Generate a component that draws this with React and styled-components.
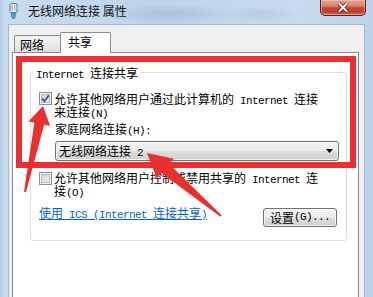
import React from "react";
import styled, { createGlobalStyle } from "styled-components";

const GlobalStyle = createGlobalStyle`
  html, body { margin: 0; padding: 0; width: 373px; height: 297px; overflow: hidden; background: #c2d6ee; }
  body { font-family: "Noto Sans CJK SC", "Noto Sans", sans-serif; font-size: 12px; color: #000; }
  #root { width: 373px; height: 297px; }
`;

const Window = styled.div`
  position: relative;
  width: 373px;
  height: 297px;
  display: flex;
  flex-direction: column;
  overflow: hidden;
  background:
    radial-gradient(ellipse 70px 10px at 170px 14px, rgba(120, 140, 170, 0.28), transparent),
    radial-gradient(ellipse 40px 8px at 260px 14px, rgba(130, 150, 180, 0.22), transparent),
    linear-gradient(90deg, #b7cde8 0px, #c9dbf0 6px, #bfd4ec 40%, #c7daef 80%, #bcd2eb 100%);
`;

const TitleBar = styled.div`
  flex: none;
  height: 24px;
  display: flex;
  align-items: flex-start;
  padding-left: 9px;
`;

const TitleIcon = styled.svg`
  flex: none;
  margin-top: 3px;
`;

const TitleText = styled.div`
  margin-left: 10px;
  padding-top: 4px;
  line-height: 14px;
  font-size: 12px;
  color: #111;
`;

const CloseButton = styled.div`
  margin-left: auto;
  margin-right: 7px;
  width: 46px;
  height: 16px;
  box-sizing: border-box;
  border: 1px solid #5b2218;
  border-top: none;
  border-radius: 0 0 5px 5px;
  background: linear-gradient(180deg, #e6a494 0%, #d98371 40%, #c44a35 52%, #bd3d2a 80%, #d9735a 100%);
  box-shadow: inset 0 0 0 1px rgba(255, 210, 200, 0.45);
  display: flex;
  align-items: center;
  justify-content: center;
`;

const Body = styled.div`
  flex: 1;
  display: flex;
  padding: 0 8px;
  min-height: 0;
`;

const Client = styled.div`
  flex: 1;
  display: flex;
  flex-direction: column;
  background: #f0f0f0;
  border: 1px solid #a7b8cc;
  border-bottom: none;
  padding: 7px 5px 0 3px;
  min-width: 0;
`;

const TabRow = styled.div`
  flex: none;
  height: 20px;
  display: flex;
  align-items: flex-end;
  padding-left: 2px;
`;

const Tab = styled.div`
  position: relative;
  z-index: ${(p) => (p.$active ? 1 : 0)};
  box-sizing: border-box;
  width: ${(p) => p.$width}px;
  height: ${(p) => (p.$active ? 21 : 17)}px;
  margin-left: ${(p) => (p.$active ? -1 : 0)}px;
  margin-bottom: ${(p) => (p.$active ? -1 : 0)}px;
  padding: 2px 0 0 ${(p) => (p.$active ? 7 : 5)}px;
  border: 1px solid #898c95;
  border-bottom: none;
  border-radius: 2px 2px 0 0;
  line-height: 13px;
  background: ${(p) => (p.$active ? "#ffffff" : "linear-gradient(180deg, #f4f4f4 0%, #ebebeb 50%, #dddddd 100%)")};
`;

const Panel = styled.div`
  flex: 1;
  background: #fff;
  border: 1px solid #898c95;
  border-bottom: none;
  padding: 13px 11px 0 17px;
`;

const Group = styled.fieldset`
  margin: 0;
  min-width: 0;
  border: 1px solid #d5dfe5;
  border-radius: 3px;
  padding: 13px 7px 13px 8px;
  display: flex;
  flex-direction: column;
`;

const Legend = styled.legend`
  padding: 0 3px;
  margin-left: -6px;
  line-height: 13px;
`;

const Mono = styled.span`
  font-family: "Liberation Mono", "DejaVu Sans Mono", monospace;
  font-size: 11px;
  line-height: 1px;
  letter-spacing: -0.6px;
`;

const CheckRow = styled.div`
  display: flex;
  align-items: flex-start;
  margin-top: ${(p) => p.$top || 0}px;
`;

const Box = styled.span`
  flex: none;
  box-sizing: border-box;
  width: 13px;
  height: 13px;
  margin-right: 2px;
  margin-top: ${(p) => p.$offset || 0}px;
  border: 1px solid #8e8f8f;
  background: linear-gradient(135deg, #c4c8cf 0%, #e6e8eb 60%, #f7f7f7 100%);
  box-shadow: inset 0 0 0 1px #f5f5f5, inset 0 0 0 2px #b6bac0;
  display: flex;
  align-items: center;
  justify-content: center;
`;

const CheckText = styled.div`
  line-height: 13px;
  white-space: nowrap;
`;

const FieldLabel = styled.div`
  margin: 4px 0 0 16px;
  line-height: 13px;
`;

const Combo = styled.div`
  margin: 6px 0 0 16px;
  height: 20px;
  box-sizing: border-box;
  border: 1px solid #707070;
  border-radius: 3px;
  background: linear-gradient(180deg, #f2f2f2 0%, #ebebeb 48%, #dddddd 52%, #cfcfcf 100%);
  box-shadow: inset 0 0 0 1px rgba(255, 255, 255, 0.7);
  display: flex;
  align-items: center;
  padding: 0 5px 0 3px;
  line-height: 18px;
`;

const ComboValue = styled.span`
  flex: 1;
`;

const LinkRow = styled.div`
  margin-top: 9px;
  display: flex;
  align-items: flex-start;
  justify-content: space-between;
`;

const Link = styled.a`
  color: #0b63b8;
  text-decoration: underline;
  line-height: 13px;
  cursor: pointer;
`;

const Button = styled.div`
  margin: 2px 2px 0 0;
  width: 74px;
  height: 19px;
  box-sizing: border-box;
  border: 1px solid #707070;
  border-radius: 3px;
  background: linear-gradient(180deg, #f2f2f2 0%, #ebebeb 48%, #dddddd 52%, #cfcfcf 100%);
  box-shadow: inset 0 0 0 1px rgba(255, 255, 255, 0.7);
  display: flex;
  align-items: center;
  justify-content: center;
  line-height: 17px;
`;

const Annotations = styled.svg`
  position: absolute;
  left: 0;
  top: 0;
  pointer-events: none;
`;

function arrowPoints(tail, tip, headLen, headHalf, baseHalf, tailHalf) {
  const [tx, ty] = tail;
  const [hx, hy] = tip;
  const dx = hx - tx;
  const dy = hy - ty;
  const L = Math.hypot(dx, dy);
  const ux = dx / L;
  const uy = dy / L;
  const nx = -uy;
  const ny = ux;
  const bx = hx - ux * headLen;
  const by = hy - uy * headLen;
  const pts = [
    [tx + nx * tailHalf, ty + ny * tailHalf],
    [bx + nx * baseHalf, by + ny * baseHalf],
    [bx + nx * headHalf, by + ny * headHalf],
    [hx, hy],
    [bx - nx * headHalf, by - ny * headHalf],
    [bx - nx * baseHalf, by - ny * baseHalf],
    [tx - nx * tailHalf, ty - ny * tailHalf],
  ];
  return pts.map((p) => p.map((v) => v.toFixed(1)).join(",")).join(" ");
}

const CheckMark = () => (
  <svg width="9" height="9" viewBox="0 0 9 9">
    <path d="M1.2 4.6 L3.4 7.2 L7.8 1.4" fill="none" stroke="#3f578c" strokeWidth="1.8" />
  </svg>
);

export default function App() {
  return (
    <>
      <GlobalStyle />
      <Window>
        <TitleBar>
          <TitleIcon width="9" height="16" viewBox="0 0 9 16">
            <rect x="1" y="0.5" width="7" height="9" rx="1.2" fill="#eef2f7" stroke="#5d7390" />
            <rect x="2.6" y="2.2" width="1.2" height="5.5" fill="#9aacc2" />
            <rect x="5.2" y="2.2" width="1.2" height="5.5" fill="#9aacc2" />
            <path d="M2.4 9.5 H6.6 V12.4 L5.6 15.5 H3.4 L2.4 12.4 Z" fill="#4aa3d6" stroke="#2b6e9e" strokeWidth="0.6" />
          </TitleIcon>
          <TitleText>无线网络连接 属性</TitleText>
          <CloseButton>
            <svg width="14" height="11" viewBox="0 0 14 11">
              <path d="M3 1.5 L11 9.5 M11 1.5 L3 9.5" stroke="#4a1d15" strokeWidth="3.8" />
              <path d="M3 1.5 L11 9.5 M11 1.5 L3 9.5" stroke="#ffffff" strokeWidth="2" />
            </svg>
          </CloseButton>
        </TitleBar>
        <Body>
          <Client>
            <TabRow>
              <Tab $width={47}>网络</Tab>
              <Tab $width={51} $active>
                共享
              </Tab>
            </TabRow>
            <Panel>
              <Group>
                <Legend>
                  <Mono>Internet </Mono>连接共享
                </Legend>
                <CheckRow>
                  <Box>
                    <CheckMark />
                  </Box>
                  <CheckText>
                    允许其他网络用户通过此计算机的<Mono> Internet </Mono>连接
                    <br />
                    来连接<Mono>(N)</Mono>
                  </CheckText>
                </CheckRow>
                <FieldLabel>
                  家庭网络连接<Mono>(H):</Mono>
                </FieldLabel>
                <Combo>
                  <ComboValue>
                    无线网络连接<Mono> 2</Mono>
                  </ComboValue>
                  <svg width="7" height="4" viewBox="0 0 7 4">
                    <path d="M0 0 H7 L3.5 4 Z" fill="#000" />
                  </svg>
                </Combo>
                <CheckRow $top={10}>
                  <Box $offset={1} />
                  <CheckText>
                    允许其他网络用户控制或禁用共享的<Mono> Internet </Mono>连
                    <br />
                    接<Mono>(O)</Mono>
                  </CheckText>
                </CheckRow>
                <LinkRow>
                  <Link>
                    使用<Mono> ICS (Internet </Mono>连接共享<Mono>)</Mono>
                  </Link>
                  <Button>
                    设置<Mono>(G)...</Mono>
                  </Button>
                </LinkRow>
              </Group>
            </Panel>
          </Client>
        </Body>
        <Annotations width="373" height="297" viewBox="0 0 373 297">
          <rect x="19" y="59" width="334" height="106" fill="none" stroke="#ec2f2f" strokeWidth="6" />
          <polygon points={arrowPoints([25, 192], [43, 106], 18, 11, 5, 1)} fill="#e8312e" />
          <polygon points={arrowPoints([221, 216], [147, 153], 24, 13, 6, 1)} fill="#e8312e" />
        </Annotations>
      </Window>
    </>
  );
}
